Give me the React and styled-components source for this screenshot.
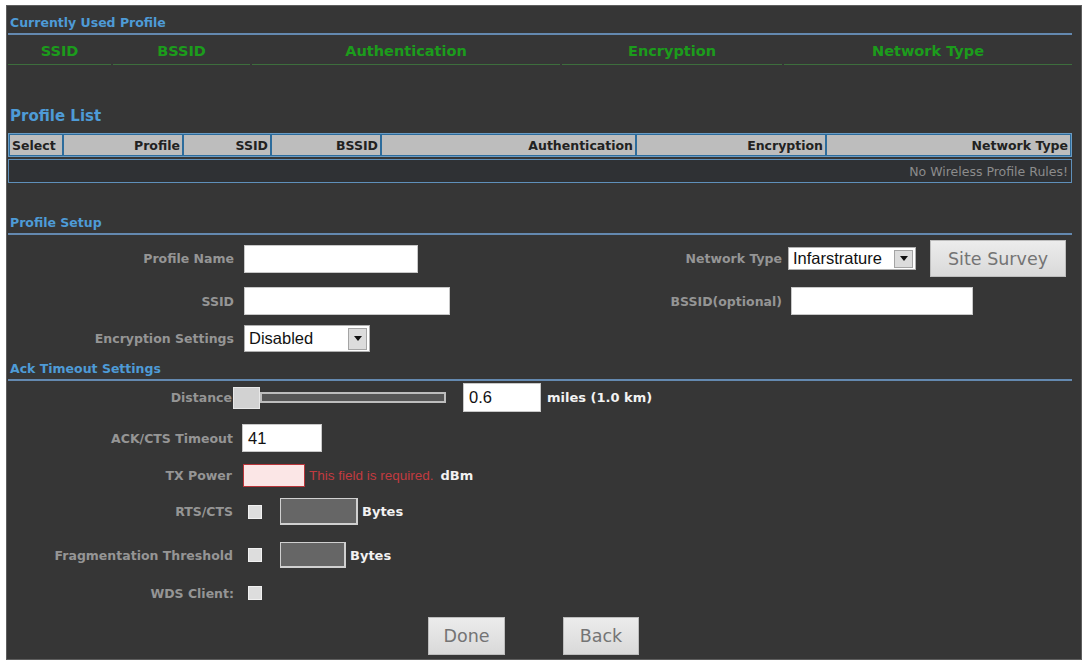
import React from 'react'
import styled, { createGlobalStyle } from 'styled-components'

const GlobalStyle = createGlobalStyle`
    body {
        margin: 0;
        background: #ffffff;
        font-family: "DejaVu Sans", Verdana, sans-serif;
    }
`

const Panel = styled.div`
    margin: 5px 0 0 6px;
    width: 1076px;
    height: 655px;
    box-sizing: border-box;
    background: #363636;
    border: 1px solid #5e5e5e;
    padding: 0 9px 0 1px;
    display: flex;
    flex-direction: column;
    overflow: hidden;
`

const SectionTitle = styled.div`
    margin-top: ${p => p.$mt || 0}px;
    padding: ${p => p.$pt || 0}px 0 3px 2px;
    font-size: 12.5px;
    font-weight: 700;
    line-height: 15px;
    color: #4e9bd6;
    border-bottom: 2px solid #6489b0;
`

const ListTitle = styled.div`
    margin-top: 42px;
    padding-left: 2px;
    font-size: 15px;
    font-weight: 700;
    line-height: 19px;
    color: #4e9bd6;
`

// green header of the active profile
const CurrentGrid = styled.div`
    display: grid;
    grid-template-columns: 103px 137px 308px 220px 1fr;
    column-gap: 2px;
`

const CurrentCell = styled.div`
    height: 27px;
    border-bottom: 1px solid #3d6e3d;
    display: flex;
    align-items: center;
    justify-content: center;
    padding-top: 2px;
    font-size: 14.5px;
    font-weight: 700;
    color: #1c9c1c;
`

const ProfileTable = styled.div`
    margin-top: 7px;
    display: flex;
    flex-direction: column;
    gap: 2px;
`

const HeaderRow = styled.div`
    display: grid;
    grid-template-columns: 52px 118px 86px 108px 253px 188px 1fr;
    column-gap: 2px;
    padding: 1px;
    background: #2d6c9c;
    border: 1px solid #6a9cc4;
`

const HeaderCell = styled.div`
    height: 20px;
    background: #bdbdbd;
    display: flex;
    align-items: center;
    justify-content: ${p => (p.$left ? 'flex-start' : 'flex-end')};
    padding: 0 2px;
    font-size: 12.5px;
    font-weight: 700;
    color: #222;
`

const EmptyRow = styled.div`
    height: 22px;
    background: #2f3134;
    border: 1px solid #5f90ba;
    display: flex;
    align-items: center;
    justify-content: flex-end;
    padding-right: 3px;
    font-size: 12.5px;
    color: #8c8c8c;
`

const SetupGrid = styled.div`
    margin-top: 5px;
    display: grid;
    grid-template-columns: 226px 216px 312px auto;
    grid-template-rows: 37px 28px 27px;
    column-gap: 10px;
    row-gap: 10px;
    align-items: center;
`

const Label = styled.div`
    width: ${p => p.$w || 'auto'};
    flex: none;
    text-align: right;
    font-size: 12.5px;
    font-weight: 700;
    color: #959595;
    white-space: nowrap;
`

const Cell = styled.div`
    display: flex;
    align-items: center;
    gap: ${p => p.$gap || 0}px;
    margin-left: ${p => p.$ml || 0}px;
`

const TextInput = styled.div`
    box-sizing: border-box;
    width: ${p => p.$w}px;
    height: ${p => p.$h || 28}px;
    background: ${p => (p.$error ? '#fbe6e6' : '#ffffff')};
    border: 1px solid ${p => (p.$error ? '#b8353a' : '#c8c8c8')};
    display: flex;
    align-items: center;
    padding-left: 5px;
    font-family: "Liberation Sans", Arial, sans-serif;
    font-size: 16.5px;
    color: #111;
`

const ShadedInput = styled.div`
    box-sizing: border-box;
    width: ${p => p.$w}px;
    height: ${p => p.$h}px;
    background: #666666;
    border: 1px solid #d0d0d0;
    border-bottom-width: 2px;
    border-right-width: 2px;
`

const SelectBox = styled.div`
    box-sizing: border-box;
    width: ${p => p.$w}px;
    height: ${p => p.$h}px;
    background: #ffffff;
    border: 1px solid #b0b0b0;
    display: flex;
    align-items: center;
    justify-content: space-between;
    padding: 0 2px 0 4px;
    font-family: "Liberation Sans", Arial, sans-serif;
    font-size: ${p => p.$fs || 16.5}px;
    color: #111;
`

const ArrowBox = styled.span`
    box-sizing: border-box;
    width: 19px;
    height: calc(100% - 3px);
    background: #dcdcdc;
    border: 1px solid #a4a4a4;
    display: flex;
    align-items: center;
    justify-content: center;

    &::after {
        content: '';
        border-left: 4px solid transparent;
        border-right: 4px solid transparent;
        border-top: 5px solid #111;
    }
`

const GrayButton = styled.div`
    box-sizing: border-box;
    width: ${p => p.$w}px;
    height: ${p => p.$h}px;
    background: linear-gradient(#ececec, #d9d9d9);
    border: 1px solid #bdbdbd;
    display: flex;
    align-items: center;
    justify-content: center;
    font-size: 17.5px;
    color: #747474;
`

const Row = styled.div`
    display: flex;
    align-items: center;
    height: ${p => p.$h}px;
    margin-top: ${p => p.$mt}px;
`

const Slider = styled.div`
    display: flex;
    align-items: center;
`

const SliderKnob = styled.div`
    width: 27px;
    height: 22px;
    box-sizing: border-box;
    background: #d2d2d2;
    border: 1px solid #e8e8e8;
`

const SliderTrack = styled.div`
    width: 186px;
    height: 11px;
    box-sizing: border-box;
    background: #565656;
    border: 2px solid #bdbdbd;
`

const Unit = styled.span`
    margin-left: ${p => p.$ml || 0}px;
    font-family: "DejaVu Sans", Verdana, sans-serif;
    font-size: 13px;
    font-weight: 700;
    color: #f2f2f2;
`

const ErrorText = styled.span`
    font-family: "Liberation Sans", Arial, sans-serif;
    font-size: 13.5px;
    color: #c23b40;
`

const Checkbox = styled.span`
    display: inline-block;
    width: 14px;
    height: 14px;
    box-sizing: border-box;
    background: #dddddd;
    border: 1px solid #f0f0f0;
`

const ButtonBar = styled.div`
    margin-top: 14px;
    padding-left: 420px;
    display: flex;
    gap: 58px;
`

const currentCols = ['SSID', 'BSSID', 'Authentication', 'Encryption', 'Network Type']
const listCols = ['Select', 'Profile', 'SSID', 'BSSID', 'Authentication', 'Encryption', 'Network Type']

export default function App() {
    return (
        <>
            <GlobalStyle />
            <Panel>
                <SectionTitle $pt={9}>Currently Used Profile</SectionTitle>
                <CurrentGrid>
                    {currentCols.map(c => (
                        <CurrentCell key={c}>{c}</CurrentCell>
                    ))}
                </CurrentGrid>

                <ListTitle>Profile List</ListTitle>
                <ProfileTable>
                    <HeaderRow>
                        {listCols.map((c, i) => (
                            <HeaderCell key={c + i} $left={i === 0}>{c}</HeaderCell>
                        ))}
                    </HeaderRow>
                    <EmptyRow>No Wireless Profile Rules!</EmptyRow>
                </ProfileTable>

                <SectionTitle $mt={32}>Profile Setup</SectionTitle>
                <SetupGrid>
                    <Label>Profile Name</Label>
                    <Cell><TextInput $w={174} /></Cell>
                    <Label>Network Type</Label>
                    <Cell $gap={14} $ml={-4}>
                        <SelectBox $w={128} $h={23}>
                            Infarstrature
                            <ArrowBox />
                        </SelectBox>
                        <GrayButton $w={136} $h={37}>Site Survey</GrayButton>
                    </Cell>

                    <Label>SSID</Label>
                    <Cell><TextInput $w={206} /></Cell>
                    <Label>BSSID(optional)</Label>
                    <Cell $ml={-1}><TextInput $w={182} /></Cell>

                    <Label>Encryption Settings</Label>
                    <Cell>
                        <SelectBox $w={126} $h={27}>
                            Disabled
                            <ArrowBox />
                        </SelectBox>
                    </Cell>
                </SetupGrid>

                <SectionTitle $mt={9}>Ack Timeout Settings</SectionTitle>

                <Row $h={29} $mt={2}>
                    <Label $w="224px">Distance</Label>
                    <Cell $ml={1}>
                        <Slider>
                            <SliderKnob />
                            <SliderTrack />
                        </Slider>
                    </Cell>
                    <Cell $ml={17} $gap={6}>
                        <TextInput $w={78} $h={29}>0.6</TextInput>
                        <Unit>miles (1.0 km)</Unit>
                    </Cell>
                </Row>

                <Row $h={28} $mt={12}>
                    <Label $w="225px">ACK/CTS Timeout</Label>
                    <Cell $ml={9}>
                        <TextInput $w={80}>41</TextInput>
                    </Cell>
                </Row>

                <Row $h={23} $mt={12}>
                    <Label $w="224px">TX Power</Label>
                    <Cell $ml={11} $gap={4}>
                        <TextInput $w={62} $h={23} $error />
                        <ErrorText>This field is required.</ErrorText>
                        <Unit $ml={3}>dBm</Unit>
                    </Cell>
                </Row>

                <Row $h={27} $mt={11}>
                    <Label $w="225px">RTS/CTS</Label>
                    <Cell $ml={15} $gap={18}>
                        <Checkbox />
                        <Cell $gap={4}>
                            <ShadedInput $w={78} $h={27} />
                            <Unit>Bytes</Unit>
                        </Cell>
                    </Cell>
                </Row>

                <Row $h={26} $mt={17}>
                    <Label $w="225px">Fragmentation Threshold</Label>
                    <Cell $ml={15} $gap={18}>
                        <Checkbox />
                        <Cell $gap={4}>
                            <ShadedInput $w={66} $h={26} />
                            <Unit>Bytes</Unit>
                        </Cell>
                    </Cell>
                </Row>

                <Row $h={20} $mt={15}>
                    <Label $w="226px">WDS Client:</Label>
                    <Cell $ml={14}>
                        <Checkbox />
                    </Cell>
                </Row>

                <ButtonBar>
                    <GrayButton $w={77} $h={38}>Done</GrayButton>
                    <GrayButton $w={76} $h={38}>Back</GrayButton>
                </ButtonBar>
            </Panel>
        </>
    )
}
